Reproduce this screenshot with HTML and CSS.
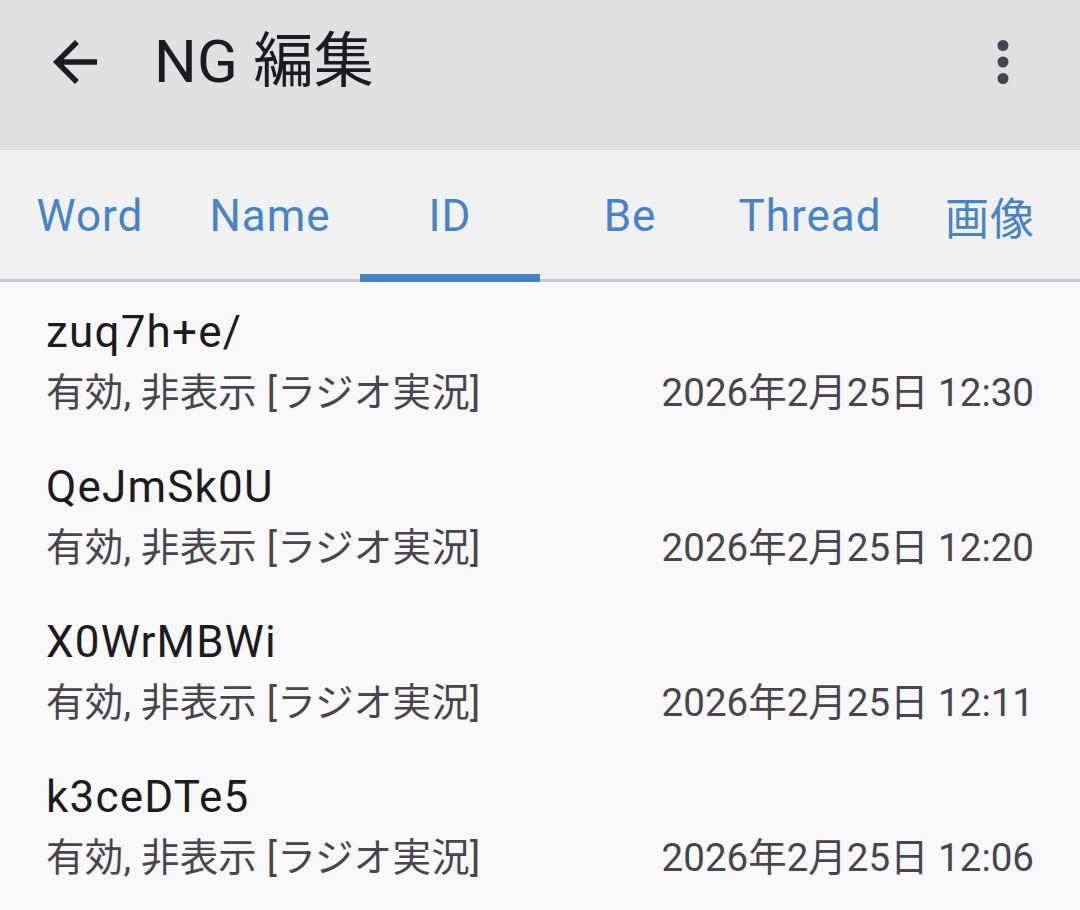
FILE: index.html
```html
<!DOCTYPE html>
<html lang="ja">
<head>
<meta charset="utf-8">
<title>NG 編集</title>
<link rel="stylesheet" href="styles.css">
</head>
<body>
<div class="screen">
  <header class="appbar">
    <div class="appbar-row">
      <button class="icon-btn back" aria-label="戻る">
        <svg viewBox="0 0 24 24" width="66" height="66"><path d="M20 11H7.83l5.59-5.59L12 4l-8 8 8 8 1.41-1.41L7.83 13H20v-2z"/></svg>
      </button>
      <h1 class="title">NG 編集</h1>
      <button class="icon-btn more" aria-label="その他">
        <svg viewBox="0 0 24 24" width="66" height="66"><circle cx="12" cy="6" r="2"/><circle cx="12" cy="12" r="2"/><circle cx="12" cy="18" r="2"/></svg>
      </button>
    </div>
  </header>
  <nav class="tabs">
    <div class="tab">Word</div>
    <div class="tab">Name</div>
    <div class="tab active">ID</div>
    <div class="tab">Be</div>
    <div class="tab">Thread</div>
    <div class="tab">画像</div>
  </nav>
  <ul class="list">
    <li class="item">
      <div class="primary">zuq7h+e/</div>
      <div class="secondary"><span class="status">有効, 非表示 [ラジオ実況]</span><span class="date">2026年2月25日 12:30</span></div>
    </li>
    <li class="item">
      <div class="primary">QeJmSk0U</div>
      <div class="secondary"><span class="status">有効, 非表示 [ラジオ実況]</span><span class="date">2026年2月25日 12:20</span></div>
    </li>
    <li class="item">
      <div class="primary">X0WrMBWi</div>
      <div class="secondary"><span class="status">有効, 非表示 [ラジオ実況]</span><span class="date">2026年2月25日 12:11</span></div>
    </li>
    <li class="item">
      <div class="primary">k3ceDTe5</div>
      <div class="secondary"><span class="status">有効, 非表示 [ラジオ実況]</span><span class="date">2026年2月25日 12:06</span></div>
    </li>
  </ul>
</div>
</body>
</html>
```
FILE: styles.css
```css
* { box-sizing: border-box; }
html, body { margin: 0; padding: 0; }
body {
  background: #f9f9fa;
  font-family: "Roboto", "Noto Sans CJK JP", sans-serif;
  color: #1c1b1f;
}
.screen { width: 1080px; min-height: 910px; background: #f9f9fa; }

.appbar { height: 150px; background: #e0e0e0; }
.appbar-row { height: 124px; display: flex; align-items: center; padding: 0 44px 0 42px; }
.icon-btn { border: 0; background: none; padding: 0; width: 66px; height: 66px; display: flex; }
.icon-btn svg { display: block; }
.back svg { fill: #1c1b1f; }
.more svg { fill: #45454f; }
.title {
  margin: 0 0 0 46px;
  flex: 1;
  font-size: 60px;
  font-weight: 400;
  line-height: 124px;
  letter-spacing: 0.3px;
  color: #1c1b1f;
}

.tabs {
  position: relative;
  height: 132px;
  display: grid;
  grid-template-columns: repeat(6, 1fr);
  background: #f1f1f1;
  border-bottom: 3px solid #c9c7d0;
}
.tab {
  position: relative;
  display: flex;
  align-items: center;
  justify-content: center;
  padding-top: 2px;
  font-size: 44px;
  letter-spacing: 1px;
  color: #4784c5;
}
.tab.active::after {
  content: "";
  position: absolute;
  left: 0; right: 0;
  bottom: -3px;
  height: 8px;
  background: #4484c4;
}

.list { list-style: none; margin: 0; padding: 0; }
.item { height: 155px; padding: 21px 46px 18px 46px; }
.primary {
  font-size: 44px;
  line-height: 58px;
  letter-spacing: 1.2px;
  color: #1c1b1f;
}
.secondary {
  display: flex;
  justify-content: space-between;
  padding-top: 3px;
  font-size: 38.5px;
  line-height: 58px;
  color: #49454f;
}
.status { letter-spacing: 0.2px; }
.date { letter-spacing: 0; }
```
